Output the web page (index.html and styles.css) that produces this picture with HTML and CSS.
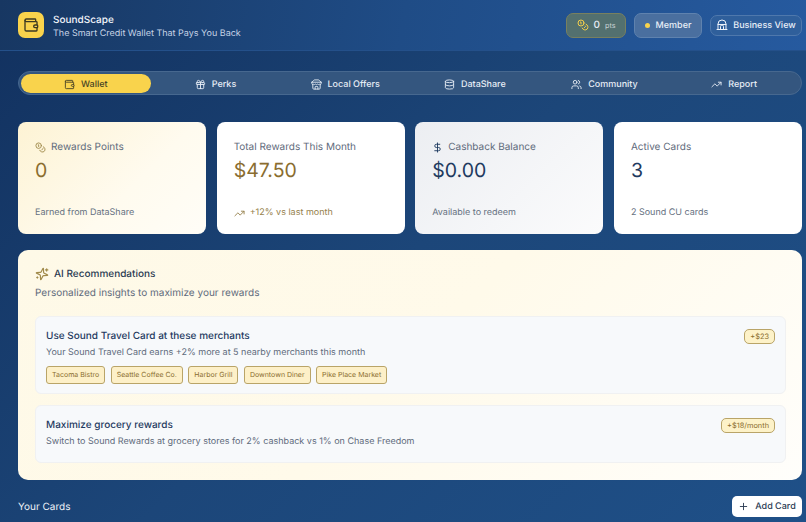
FILE: index.html
```html
<!DOCTYPE html>
<html lang="en">
<head>
    <meta charset="UTF-8">
    <meta name="viewport" content="width=device-width, initial-scale=1.0">
    <title>SoundScape</title>
    <link rel="stylesheet" href="styles.css">
</head>
<body>
    <header class="top-bar">
        <div class="brand">
            <div class="brand-icon">
                <svg width="16" height="16" viewBox="0 0 24 24" fill="none" stroke="#3d3a22" stroke-width="2" stroke-linecap="round" stroke-linejoin="round"><path d="M19 7V4a1 1 0 0 0-1-1H5a2 2 0 0 0 0 4h15a1 1 0 0 1 1 1v4h-3a2 2 0 0 0 0 4h3a1 1 0 0 0 1-1v-2a1 1 0 0 0-1-1"/><path d="M3 5v14a2 2 0 0 0 2 2h15a1 1 0 0 0 1-1v-4"/></svg>
            </div>
            <div class="brand-text">
                <div class="brand-name">SoundScape</div>
                <div class="brand-tag">The Smart Credit Wallet That Pays You Back</div>
            </div>
        </div>
        <div class="top-actions">
            <div class="chip chip-points">
                <svg width="12" height="12" viewBox="0 0 24 24" fill="none" stroke="#f5d04a" stroke-width="2" stroke-linecap="round" stroke-linejoin="round"><circle cx="8" cy="8" r="6"/><path d="M18.09 10.37A6 6 0 1 1 10.34 18"/><path d="M7 6h1v4"/><path d="m16.71 13.88.7.71-2.82 2.82"/></svg>
                <span class="points-num">0</span>
                <span class="points-unit">pts</span>
            </div>
            <div class="chip chip-member"><span class="dot"></span>Member</div>
            <div class="chip chip-business">
                <svg width="12" height="12" viewBox="0 0 24 24" fill="none" stroke="#eef3fa" stroke-width="2" stroke-linecap="round" stroke-linejoin="round"><path d="M4 21V10a8 8 0 0 1 16 0v11"/><path d="M2 21h20"/><path d="M9 21v-6a3 3 0 0 1 6 0v6"/><path d="M4 11h16"/></svg>
                Business View
            </div>
        </div>
    </header>

    <main class="content">
        <nav class="tabs">
            <div class="tab active">
                <svg width="11" height="11" viewBox="0 0 24 24" fill="none" stroke="currentColor" stroke-width="2" stroke-linecap="round" stroke-linejoin="round"><path d="M19 7V4a1 1 0 0 0-1-1H5a2 2 0 0 0 0 4h15a1 1 0 0 1 1 1v4h-3a2 2 0 0 0 0 4h3a1 1 0 0 0 1-1v-2a1 1 0 0 0-1-1"/><path d="M3 5v14a2 2 0 0 0 2 2h15a1 1 0 0 0 1-1v-4"/></svg>
                Wallet
            </div>
            <div class="tab">
                <svg width="11" height="11" viewBox="0 0 24 24" fill="none" stroke="currentColor" stroke-width="2" stroke-linecap="round" stroke-linejoin="round"><rect x="3" y="8" width="18" height="4" rx="1"/><path d="M12 8v13"/><path d="M19 12v7a2 2 0 0 1-2 2H7a2 2 0 0 1-2-2v-7"/><path d="M7.5 8a2.5 2.5 0 0 1 0-5A4.8 8 0 0 1 12 8a4.8 8 0 0 1 4.5-5 2.5 2.5 0 0 1 0 5"/></svg>
                Perks
            </div>
            <div class="tab">
                <svg width="11" height="11" viewBox="0 0 24 24" fill="none" stroke="currentColor" stroke-width="2" stroke-linecap="round" stroke-linejoin="round"><path d="m2 7 4.41-4.41A2 2 0 0 1 7.83 2h8.34a2 2 0 0 1 1.42.59L22 7"/><path d="M4 12v8a2 2 0 0 0 2 2h12a2 2 0 0 0 2-2v-8"/><path d="M15 22v-4a2 2 0 0 0-2-2h-2a2 2 0 0 0-2 2v4"/><path d="M2 7h20"/><path d="M22 7v3a2 2 0 0 1-2 2 2.7 2.7 0 0 1-1.59-.63.7.7 0 0 0-.82 0A2.7 2.7 0 0 1 16 12a2.7 2.7 0 0 1-1.59-.63.7.7 0 0 0-.82 0A2.7 2.7 0 0 1 12 12a2.7 2.7 0 0 1-1.59-.63.7.7 0 0 0-.82 0A2.7 2.7 0 0 1 8 12a2.7 2.7 0 0 1-1.59-.63.7.7 0 0 0-.82 0A2.7 2.7 0 0 1 4 12a2 2 0 0 1-2-2V7"/></svg>
                Local Offers
            </div>
            <div class="tab">
                <svg width="11" height="11" viewBox="0 0 24 24" fill="none" stroke="currentColor" stroke-width="2" stroke-linecap="round" stroke-linejoin="round"><ellipse cx="12" cy="5" rx="9" ry="3"/><path d="M3 5v14a9 3 0 0 0 18 0V5"/><path d="M3 12a9 3 0 0 0 18 0"/></svg>
                DataShare
            </div>
            <div class="tab">
                <svg width="11" height="11" viewBox="0 0 24 24" fill="none" stroke="currentColor" stroke-width="2" stroke-linecap="round" stroke-linejoin="round"><path d="M16 21v-2a4 4 0 0 0-4-4H6a4 4 0 0 0-4 4v2"/><circle cx="9" cy="7" r="4"/><path d="M22 21v-2a4 4 0 0 0-3-3.87"/><path d="M16 3.13a4 4 0 0 1 0 7.75"/></svg>
                Community
            </div>
            <div class="tab">
                <svg width="11" height="11" viewBox="0 0 24 24" fill="none" stroke="currentColor" stroke-width="2" stroke-linecap="round" stroke-linejoin="round"><path d="M22 7 13.5 15.5l-5-5L2 17"/><path d="M16 7h6v6"/></svg>
                Report
            </div>
        </nav>

        <section class="stats">
            <div class="stat stat-gold">
                <div class="stat-label">
                    <svg width="11" height="11" viewBox="0 0 24 24" fill="none" stroke="#a08a4a" stroke-width="2" stroke-linecap="round" stroke-linejoin="round"><circle cx="8" cy="8" r="6"/><path d="M18.09 10.37A6 6 0 1 1 10.34 18"/><path d="M7 6h1v4"/><path d="m16.71 13.88.7.71-2.82 2.82"/></svg>
                    Rewards Points
                </div>
                <div class="stat-value gold">0</div>
                <div class="stat-note">Earned from DataShare</div>
            </div>
            <div class="stat">
                <div class="stat-label">Total Rewards This Month</div>
                <div class="stat-value gold">$47.50</div>
                <div class="stat-note note-up">
                    <svg width="11" height="11" viewBox="0 0 24 24" fill="none" stroke="currentColor" stroke-width="2" stroke-linecap="round" stroke-linejoin="round"><path d="M22 7 13.5 15.5l-5-5L2 17"/><path d="M16 7h6v6"/></svg>
                    +12% vs last month
                </div>
            </div>
            <div class="stat stat-grey">
                <div class="stat-label">
                    <svg width="11" height="11" viewBox="0 0 24 24" fill="none" stroke="#1e3a5f" stroke-width="2" stroke-linecap="round" stroke-linejoin="round"><path d="M12 2v20"/><path d="M17 5H9.5a3.5 3.5 0 0 0 0 7h5a3.5 3.5 0 0 1 0 7H6"/></svg>
                    Cashback Balance
                </div>
                <div class="stat-value">$0.00</div>
                <div class="stat-note">Available to redeem</div>
            </div>
            <div class="stat">
                <div class="stat-label">Active Cards</div>
                <div class="stat-value">3</div>
                <div class="stat-note">2 Sound CU cards</div>
            </div>
        </section>

        <section class="ai-panel">
            <h2 class="ai-title">
                <svg width="14" height="14" viewBox="0 0 24 24" fill="none" stroke="#a08a4a" stroke-width="2" stroke-linecap="round" stroke-linejoin="round"><path d="M9.94 15.5A2 2 0 0 0 8.5 14.06l-6.14-1.58a.5.5 0 0 1 0-.96L8.5 9.94A2 2 0 0 0 9.94 8.5l1.58-6.14a.5.5 0 0 1 .96 0l1.58 6.14a2 2 0 0 0 1.44 1.44l6.14 1.58a.5.5 0 0 1 0 .96l-6.14 1.58a2 2 0 0 0-1.44 1.44l-1.58 6.14a.5.5 0 0 1-.96 0z" transform="rotate(12 12 12)"/><path d="M20 3v4"/><path d="M22 5h-4"/><path d="M4 17v2"/><path d="M5 18H3"/></svg>
                AI Recommendations
            </h2>
            <p class="ai-sub">Personalized insights to maximize your rewards</p>

            <div class="rec rec-first">
                <div class="rec-head">
                    <h3>Use Sound Travel Card at these merchants</h3>
                    <span class="badge">+$23</span>
                </div>
                <p>Your Sound Travel Card earns +2% more at 5 nearby merchants this month</p>
                <div class="tags">
                    <span class="tag">Tacoma Bistro</span>
                    <span class="tag">Seattle Coffee Co.</span>
                    <span class="tag">Harbor Grill</span>
                    <span class="tag">Downtown Diner</span>
                    <span class="tag">Pike Place Market</span>
                </div>
            </div>

            <div class="rec">
                <div class="rec-head">
                    <h3>Maximize grocery rewards</h3>
                    <span class="badge">+$18/month</span>
                </div>
                <p>Switch to Sound Rewards at grocery stores for 2% cashback vs 1% on Chase Freedom</p>
            </div>
        </section>

        <div class="cards-head">
            <h2>Your Cards</h2>
            <button class="add-card">
                <svg width="11" height="11" viewBox="0 0 24 24" fill="none" stroke="currentColor" stroke-width="2" stroke-linecap="round"><path d="M5 12h14"/><path d="M12 5v14"/></svg>
                Add Card
            </button>
        </div>
    </main>
</body>
</html>
```

FILE: styles.css
```css
* {
    margin: 0;
    padding: 0;
    box-sizing: border-box;
}

html,
body {
    height: 522px;
    overflow: hidden;
}

body {
    font-family: 'Inter', sans-serif;
    text-rendering: geometricPrecision;
    color: #1e3a5f;
    background: linear-gradient(135deg, #12315f 0%, #1c4679 50%, #1f5088 100%);
}

.top-bar {
    height: 51px;
    padding: 0 4px 0 18px;
    display: flex;
    align-items: center;
    justify-content: space-between;
    background: linear-gradient(100deg, #173762 0%, #1f4c86 50%, #265a9f 100%);
    border-bottom: 1px solid #24508a;
}

.brand {
    display: flex;
    align-items: center;
    gap: 9px;
}

.brand-icon {
    width: 26px;
    height: 26px;
    border-radius: 7px;
    background: #f9d34c;
    display: flex;
    align-items: center;
    justify-content: center;
}

.brand-text {
    padding-top: 3px;
}

.brand-name {
    font-size: 10px;
    line-height: 14px;
    font-weight: 450;
    color: #f2f5fa;
}

.brand-tag {
    font-size: 9px;
    line-height: 14px;
    color: #c6d3e6;
}

.top-actions {
    display: flex;
    align-items: center;
    gap: 8px;
}

.chip {
    display: flex;
    align-items: center;
    border-radius: 7px;
    font-size: 9px;
    font-weight: 450;
    color: #e8eef7;
}

.chip-points {
    height: 25px;
    width: 60px;
    justify-content: center;
    gap: 5px;
    background: #53706f;
    border: 1px solid #78805f;
}

.points-num {
    font-size: 10px;
}

.points-unit {
    font-size: 7.2px;
    font-weight: 400;
    color: #c8d2d4;
}

.chip-member {
    height: 25px;
    width: 68px;
    justify-content: center;
    gap: 6px;
    background: #4a6f9f;
    border: 1px solid #5f82ae;
}

.dot {
    width: 5px;
    height: 5px;
    border-radius: 50%;
    background: #f9d34c;
}

.chip-business {
    height: 21px;
    width: 92px;
    justify-content: center;
    gap: 5px;
    background: #2f5f9b;
    border: 1px solid #4f78ac;
}

.content {
    padding: 20px 4px 0 18px;
}

.tabs {
    height: 24px;
    display: grid;
    grid-template-columns: repeat(6, 1fr);
    align-items: center;
    padding: 0 2px;
    border-radius: 12px;
    background: #34567f;
    border: 1px solid #47688f;
}

.tab {
    height: 19px;
    padding-top: 2px;
    display: flex;
    align-items: center;
    justify-content: center;
    gap: 6px;
    border-radius: 10px;
    font-size: 9px;
    font-weight: 500;
    color: #e6ecf5;
}

.tab.active {
    background: #f9d34c;
    color: #4a4526;
}

.stats {
    margin-top: 27px;
    display: grid;
    grid-template-columns: repeat(4, 1fr);
    gap: 10.5px;
}

.stat {
    height: 112px;
    padding: 18px 17px 15px;
    border-radius: 8px;
    background: #fff;
    display: flex;
    flex-direction: column;
}

.stat-gold {
    background: linear-gradient(135deg, #fdf3d4 0%, #fffbef 60%, #fffdf7 100%);
}

.stat-grey {
    background: linear-gradient(135deg, #eceef2 0%, #f5f6f8 60%, #fbfbfc 100%);
}

.stat-label {
    display: flex;
    align-items: center;
    gap: 5px;
    font-size: 10px;
    line-height: 14px;
    color: #5f6b7c;
}

.stat-value {
    margin-top: 4px;
    font-size: 19.5px;
    line-height: 24px;
    color: #1e3a5f;
}

.stat-value.gold {
    color: #8a6d2f;
}

.stat-note {
    margin-top: auto;
    display: flex;
    align-items: center;
    gap: 5px;
    font-size: 9px;
    line-height: 12px;
    color: #667181;
}

.note-up {
    color: #96814d;
}

.ai-panel {
    margin-top: 16px;
    height: 230px;
    padding: 17px 16px 17px 17px;
    border-radius: 10px;
    background: linear-gradient(135deg, #fef9e7 0%, #fffaea 50%, #fffefb 100%);
}

.ai-title {
    display: flex;
    align-items: center;
    gap: 5px;
    font-size: 10px;
    line-height: 14px;
    font-weight: 450;
    color: #2a3a52;
}

.ai-sub {
    margin-top: 5px;
    font-size: 10px;
    line-height: 14px;
    color: #5f6b7c;
}

.rec {
    margin-top: 11px;
    height: 58px;
    padding: 12px 10px;
    border-radius: 6px;
    background: #f7f9fb;
    border: 1px solid #f0f1f2;
}

.rec-first {
    margin-top: 16px;
    height: 78px;
}

.rec-head {
    display: flex;
    align-items: flex-start;
    justify-content: space-between;
    height: 14px;
}

.rec h3 {
    font-size: 10px;
    line-height: 14px;
    font-weight: 450;
    color: #1e3a5f;
}

.rec p {
    margin-top: 4px;
    font-size: 9px;
    line-height: 12px;
    color: #5f6b7c;
}

.badge {
    height: 15px;
    padding: 0 5px;
    border-radius: 5px;
    font-size: 7.4px;
    line-height: 13px;
    color: #8a6d2f;
    background: #fdf2c8;
    border: 1px solid #b9a468;
}

.tags {
    margin-top: 7px;
    display: flex;
    gap: 5.5px;
}

.tag {
    padding: 2px 5px;
    border-radius: 3px;
    font-size: 7px;
    line-height: 12px;
    color: #8a6d2f;
    background: #fdf0c8;
    border: 1px solid #b9a468;
}

.cards-head {
    margin-top: 16px;
    display: flex;
    align-items: center;
    justify-content: space-between;
}

.cards-head h2 {
    font-size: 10px;
    font-weight: 400;
    color: #eef2f8;
}

.add-card {
    height: 21px;
    width: 70px;
    display: flex;
    align-items: center;
    justify-content: center;
    gap: 6px;
    border: none;
    border-radius: 5px;
    background: #fff;
    font-family: inherit;
    text-rendering: inherit;
    font-size: 9px;
    font-weight: 500;
    color: #2a3a52;
}
```
